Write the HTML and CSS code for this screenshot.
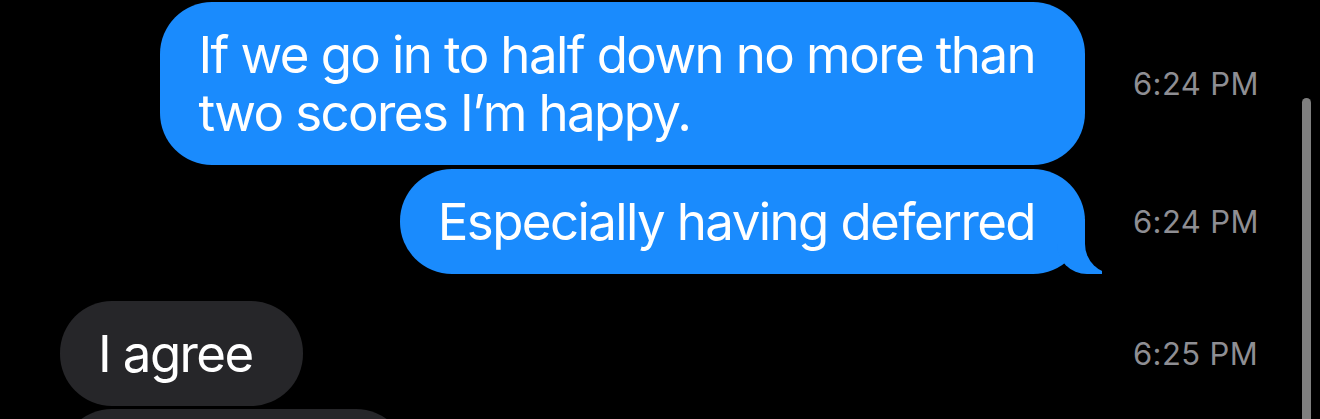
FILE: index.html
```html
<!DOCTYPE html>
<html>
<head>
    <title>Messages</title>
    <link rel="stylesheet" href="styles.css">
</head>
<body>
    <div class="thread">
        <div class="row sent">
            <div class="lane">
                <div class="bubble blue">If we go in to half down no more than<br>two scores I’m happy.</div>
            </div>
            <div class="time">6:24 PM</div>
        </div>
        <div class="row sent close">
            <div class="lane">
                <div class="bubble blue tail">Especially having deferred</div>
            </div>
            <div class="time">6:24 PM</div>
        </div>
        <div class="row received apart">
            <div class="lane">
                <div class="bubble gray">I agree</div>
            </div>
            <div class="time">6:25 PM</div>
        </div>
        <div class="row received close tight">
            <div class="lane">
                <div class="bubble gray stub"></div>
            </div>
            <div class="time"></div>
        </div>
    </div>
    <div class="scrollbar"></div>
</body>
</html>
```

FILE: styles.css
```css
body {
    margin: 0;
    background: #000;
    font-family: Inter, "Noto Sans", sans-serif;
    overflow: hidden;
    height: 419px;
}
.thread {
    padding: 2px 0 0 60px;
}
.row {
    display: flex;
    align-items: center;
}
.row.close {
    margin-top: 4px;
}
.row.tight {
    margin-top: 3px;
}
.row.apart {
    margin-top: 27px;
}
.lane {
    flex: 1;
    display: flex;
}
.sent .lane {
    justify-content: flex-end;
}
.time {
    width: 235px;
    box-sizing: border-box;
    padding-left: 48px;
    font-size: 31px;
    letter-spacing: 0.4px;
    color: #8e8e93;
    white-space: nowrap;
}
.bubble {
    position: relative;
    font-size: 51px;
    line-height: 58px;
    letter-spacing: -1.6px;
    color: #fff;
    padding: 23.5px 50px 23.5px 38px;
    border-radius: 52px;
    white-space: nowrap;
}
.blue {
    background: #1a8bfd;
}
.gray {
    background: #262629;
}
.stub {
    width: 348px;
    height: 58px;
    box-sizing: content-box;
    padding: 23.5px 0;
}

/* little tail under the last sent bubble */
.tail::before {
    content: "";
    position: absolute;
    right: -17px;
    bottom: 0;
    width: 45px;
    height: 55px;
    background: #1a8bfd;
    border-bottom-left-radius: 30px 30px;
}
.tail::after {
    content: "";
    position: absolute;
    right: -40px;
    bottom: 0;
    width: 40px;
    height: 56px;
    background: #000;
    border-bottom-left-radius: 30px;
}

.scrollbar {
    position: absolute;
    top: 98px;
    left: 1302px;
    width: 9px;
    height: 340px;
    border-radius: 5px;
    background: #7f7f7f;
}
```
